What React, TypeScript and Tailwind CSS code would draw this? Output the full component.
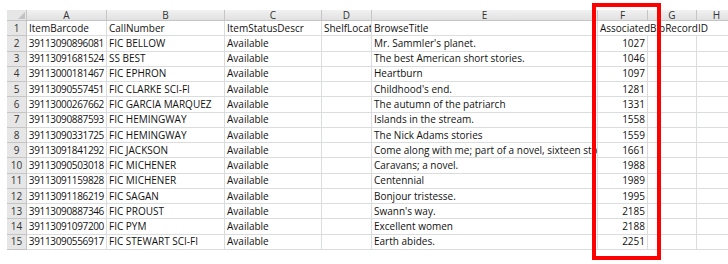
import React from "react";

const rows: [string, string, string, string, string, string][] = [
  ["39113090896081", "FIC BELLOW", "Available", "", "Mr. Sammler's planet.", "1027"],
  ["39113091681524", "SS BEST", "Available", "", "The best American short stories.", "1046"],
  ["39113000181467", "FIC EPHRON", "Available", "", "Heartburn", "1097"],
  ["39113090557451", "FIC CLARKE SCI-FI", "Available", "", "Childhood's end.", "1281"],
  ["39113000267662", "FIC GARCIA MARQUEZ", "Available", "", "The autumn of the patriarch", "1331"],
  ["39113090887593", "FIC HEMINGWAY", "Available", "", "Islands in the stream.", "1558"],
  ["39113090331725", "FIC HEMINGWAY", "Available", "", "The Nick Adams stories", "1559"],
  ["39113091841292", "FIC JACKSON", "Available", "", "Come along with me; part of a novel, sixteen stories", "1661"],
  ["39113090503018", "FIC MICHENER", "Available", "", "Caravans; a novel.", "1988"],
  ["39113091159828", "FIC MICHENER", "Available", "", "Centennial", "1989"],
  ["39113091186219", "FIC SAGAN", "Available", "", "Bonjour tristesse.", "1995"],
  ["39113090887346", "FIC PROUST", "Available", "", "Swann's way.", "2185"],
  ["39113091097200", "FIC PYM", "Available", "", "Excellent women", "2188"],
  ["39113090556917", "FIC STEWART SCI-FI", "Available", "", "Earth abides.", "2251"],
];

const cell =
  "border-r border-b border-[#dadcdd] overflow-hidden whitespace-nowrap flex items-center px-[2px] text-[#111]";
const head =
  "border-r border-b border-[#c5c5c5] bg-gradient-to-b from-[#f1f1f1] to-[#e1e1e1] flex items-center justify-center text-[#333]";
const rowHead =
  "border-r border-b border-[#c5c5c5] bg-[#e6e6e6] flex items-center justify-center text-[#333]";

export default function App() {
  return (
    <div className="w-[728px] h-[264px] bg-white overflow-hidden">
      <div
        className="relative pt-[10px] pl-[7px]"
        style={{ fontFamily: '"Open Sans", "Liberation Sans", sans-serif' }}
      >
        <div className="grid grid-cols-[20px_80px_118px_97px_50px_226px_50px_49px_40px] grid-rows-[11px_repeat(15,minmax(0,1fr))] h-[240px] w-[730px] text-[10px]">
          <div className="border-r border-b border-[#c5c5c5] bg-[#e6e6e6] relative">
            <svg className="absolute right-[1px] bottom-[1px]" width="7" height="7" viewBox="0 0 7 7">
              <polygon points="7,0 7,7 0,7" fill="#c2c2c2" />
            </svg>
          </div>
          {["A", "B", "C", "D", "E", "F", "G", "H"].map((l) => (
            <div key={l} className={head}>
              {l}
            </div>
          ))}
          <div className={rowHead}>1</div>
          <div className={cell}>ItemBarcode</div>
          <div className={cell}>CallNumber</div>
          <div className={cell}>ItemStatusDescr</div>
          <div className={cell}>ShelfLocation</div>
          <div className={cell}>BrowseTitle</div>
          <div className={`${cell} col-span-3`}>AssociatedBibRecordID</div>
          {rows.map((r, i) => (
            <React.Fragment key={i}>
              <div className={rowHead}>{i + 2}</div>
              <div className={`${cell} justify-end tracking-[-0.35px]`}>{r[0]}</div>
              <div className={cell}>{r[1]}</div>
              <div className={cell}>{r[2]}</div>
              <div className={cell}>{r[3]}</div>
              <div className={cell}>{r[4]}</div>
              <div className={`${cell} justify-end`}>{r[5]}</div>
              <div className={cell}></div>
              <div className={cell}></div>
            </React.Fragment>
          ))}
        </div>
        <div className="absolute left-[592px] top-[3px] w-[69px] h-[257px] border-4 border-[#ff0000] pointer-events-none" />
      </div>
    </div>
  );
}
